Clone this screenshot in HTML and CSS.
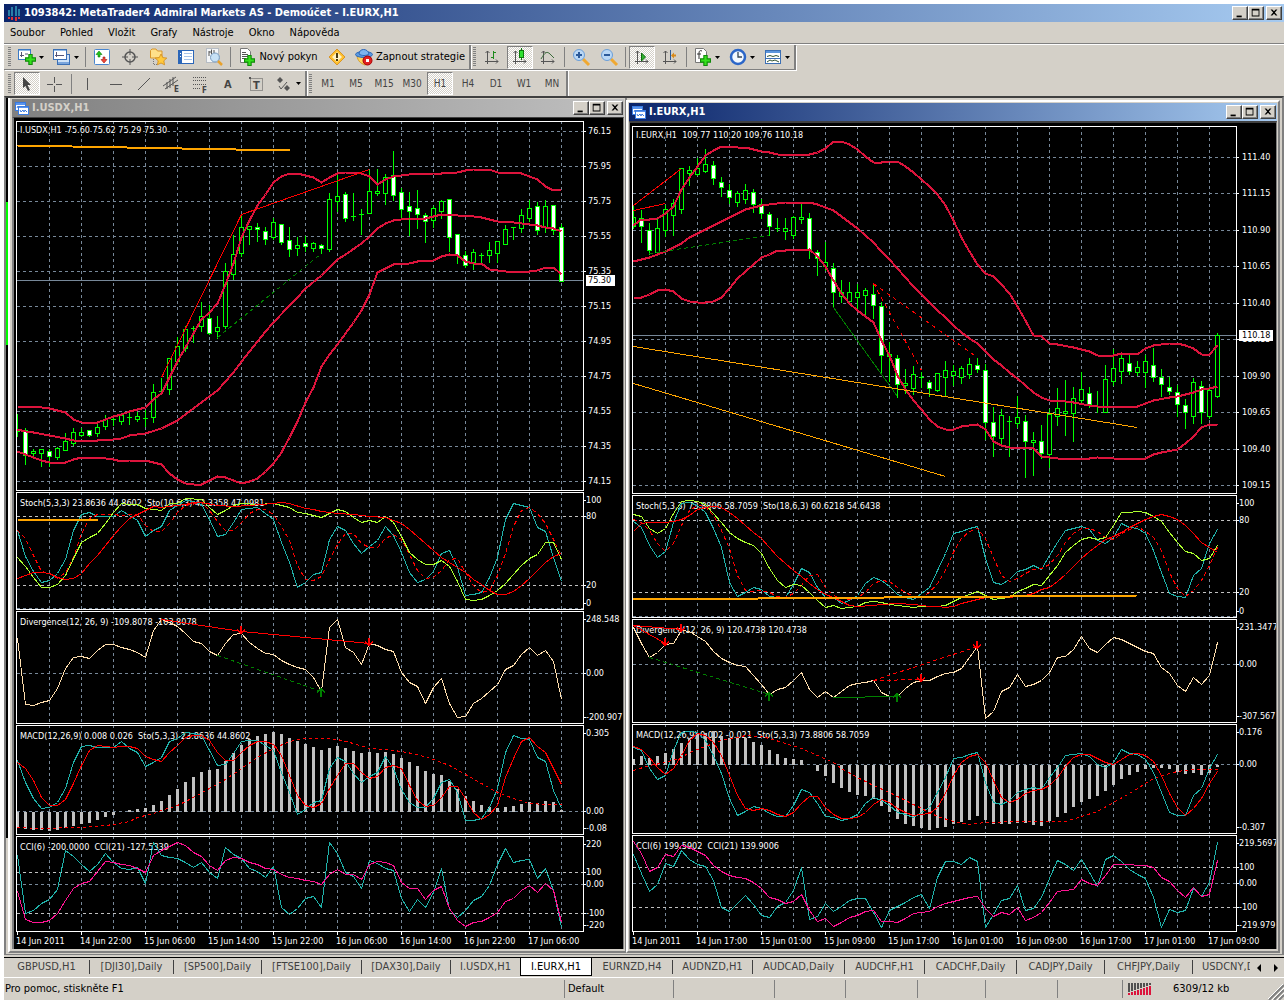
FILE: index.html
```html
<!DOCTYPE html>
<html lang="cs">
<head>
<meta charset="utf-8">
<title>1093842: MetaTrader4 Admiral Markets AS - Demoúčet - I.EURX,H1</title>
<link rel="stylesheet" href="styles.css">
</head>
<body>
<svg class="defs" aria-hidden="true">
  <symbol id="min" viewBox="0 0 16 14"><path d="M4 10h6v2H4z"/></symbol>
  <symbol id="max" viewBox="0 0 16 14"><path d="M3 2h9v9H3zM4 4v6h7V4z" fill-rule="evenodd"/></symbol>
  <symbol id="close" viewBox="0 0 16 14"><path d="M4 3h2l2 2 2-2h2L9 6.5 12 10h-2L8 8l-2 2H4l3-3.5z"/></symbol>
  <symbol id="caret" viewBox="0 0 5 3"><path d="M0 0h5L2.500 3z"/></symbol>
  <symbol id="child" viewBox="0 0 14 14"><rect x=".5" y="1.500" width="10" height="8" fill="#fff" stroke="#3a7be0"/><path d="M1 2h9v2H1z" fill="#5b95ee"/><path d="M2 7l1-2 1 2 1-2 1 2" stroke="#3a7be0" fill="none"/><rect x="3.500" y="5.500" width="10" height="8" fill="#fff" stroke="#3a7be0"/><path d="M4 6h9v1H4z" fill="#5b95ee"/><path d="M5 9l1 2 2-2 1 2 1-2 2 2" stroke="#3a7be0" fill="none"/></symbol>
  <symbol id="axes" viewBox="0 0 16 16"><path d="M3.500 15V2M1 12.500h13M1.500 4l2-2 2 2M12 10.500l2 2-2 2" fill="none" stroke="#555"/></symbol>
  <symbol id="plus" viewBox="0 0 10 10"><path d="M3.500.5h3v3h3v3h-3v3h-3v-3h-3v-3h3z" fill="#35e21c" stroke="#128a0c"/></symbol>
</svg>
<div class="app">
  <header class="titlebar main-title">
    <svg class="app-icon" viewBox="0 0 14 16"><path d="M1 5h2v6H1zM4 2h2v9H4zM8 1h2v10H8zM11 4h2v7h-2z" fill="#2a7fa8"/><path d="M1 12h2v2H1zM4 12h2v3H4zM8 12h2v4H8zM11 12h2v2h-2z" fill="#d8333c"/></svg>
    <h1>1093842: MetaTrader4 Admiral Markets AS - Demoúčet - I.EURX,H1</h1>
    <div class="winbtns"><button aria-label="Minimalizovat"><svg><use href="#min"/></svg></button><button aria-label="Maximalizovat"><svg><use href="#max"/></svg></button><button class="x" aria-label="Zavřít"><svg><use href="#close"/></svg></button></div>
  </header>
  <nav class="menu">
    <button>Soubor</button><button>Pohled</button><button>Vložit</button><button>Grafy</button><button>Nástroje</button><button>Okno</button><button>Nápověda</button>
  </nav>
  <div class="toolrow first">
    <div class="group">
      <i class="grip"></i>
      <button class="tool drop" aria-label="Nový graf"><svg class="ic" viewBox="0 0 18 18"><rect x=".5" y="1.500" width="12" height="10" fill="#fff" stroke="#3b7ac4"/><path d="M1 2h11v1H1z" fill="#8fb9e8"/><path d="M3.500 4v5M2 7.500h4M7 6h3" stroke="#557" fill="none"/><use href="#plus" x="7" y="6" width="11" height="11"/></svg><svg class="caret"><use href="#caret"/></svg></button>
      <button class="tool drop" aria-label="Profily"><svg class="ic" viewBox="0 0 18 18"><rect x="4.500" y="6.500" width="12" height="10" fill="#cfe2f7" stroke="#3b6fb4"/><path d="M5 14h11v2H5z" fill="#7aa5dc"/><rect x=".5" y="1.500" width="13" height="10" fill="#fff" stroke="#3b6fb4"/><path d="M1 2h12v1H1z" fill="#8fb9e8"/><path d="M3.500 4v5M2 7.500h9" stroke="#557" fill="none"/></svg><svg class="caret"><use href="#caret"/></svg></button>
      <i class="sep"></i>
      <button class="tool" aria-label="Přehled trhu"><svg class="ic" viewBox="0 0 18 18"><rect x="1.500" y="1.500" width="15" height="15" rx="1" fill="#fff" stroke="#4a86d0"/><path d="M6 3l3 3.500H7V9H5V6.500H3z" fill="#23c31a" stroke="#0d7d0a" stroke-width=".6"/><path d="M11 15l3-3.500h-2V9h-2v2.500H8z" fill="#f04a3a" stroke="#a01010" stroke-width=".6"/></svg></button>
      <button class="tool" aria-label="Datové okno"><svg class="ic" viewBox="0 0 18 18"><circle cx="9" cy="9" r="5" fill="none" stroke="#555" stroke-width="1.500"/><path d="M9 1v6M9 11v6M1 9h6M11 9h6" stroke="#555"/></svg></button>
      <button class="tool" aria-label="Navigátor"><svg class="ic" viewBox="0 0 18 18"><path d="M1.500 10V2.500L3 1h4l1.500 2H13v7z" fill="#ffe08a" stroke="#d9962a"/><path d="M4.500 11v5.500H8" stroke="#777" fill="none" stroke-dasharray="1 1"/><path d="M12 6l1.800 3.600 4 .5-3 2.700.8 4L12 15l-3.600 1.800.8-4-3-2.700 4-.5z" fill="#ffc93c" stroke="#d08a1a" stroke-width=".8"/></svg></button>
      <button class="tool" aria-label="Terminál"><svg class="ic" viewBox="0 0 18 18"><rect x="1.500" y="2.500" width="15" height="13" fill="#fff" stroke="#2b66b8"/><path d="M2 3h3v12H2z" fill="#2b66b8"/><path d="M7 5.500h8M7 8.500h8M7 11.500h8" stroke="#a8c4e8"/><path d="M3 5h1v1H3zM3 8h1v1H3z" fill="#fff"/></svg></button>
      <button class="tool" aria-label="Tester strategií"><svg class="ic" viewBox="0 0 18 18"><rect x="1.500" y=".5" width="12" height="14" fill="#f4f6f8" stroke="#b6bcc4"/><path d="M4 8V3M6.500 6V1.500M9 5V2M4 4h3" stroke="#555"/><circle cx="10" cy="9.500" r="4.500" fill="#bcdcf5" fill-opacity=".8" stroke="#7a9cc0"/><path d="M13 13l4 4" stroke="#e8a12c" stroke-width="2.500"/></svg></button>
      <i class="sep"></i>
      <button class="tool wide order"><svg class="ic" viewBox="0 0 18 18"><path d="M2.500.5h7l3 3v11h-10z" fill="#fff" stroke="#777"/><path d="M4 4.500h4M4 6.500h6M4 8.500h6M4 10.500h4" stroke="#555"/><use href="#plus" x="6" y="7" width="11" height="11"/></svg><span>Nový pokyn</span></button>
      <button class="tool" aria-label="MetaEditor"><svg class="ic" viewBox="0 0 18 18"><path d="M9 1l8 8-8 8-8-8z" fill="#ffc02e" stroke="#d8962a"/><path d="M9 4l5 5-5 5-5-5z" fill="#fff2c4"/><path d="M8 5h2v5H8zM8 11h2v2H8z" fill="#4a3a10"/></svg></button>
      <button class="tool wide strategy"><svg class="ic" viewBox="0 0 18 18"><path d="M2 8c1 5 3 7 8 9 3-1 5-5 5-9z" fill="#ffd45a" stroke="#d09a2a"/><ellipse cx="9" cy="6.500" rx="8.500" ry="3" fill="#5b9be0" stroke="#2b66b8"/><path d="M4 6c0-6 9-6 10 0-3 2-7 2-10 0z" fill="#7db4ee" stroke="#2b66b8"/><circle cx="12.500" cy="12.500" r="4.500" fill="#e02020" stroke="#a00"/><path d="M11 11h3v3h-3z" fill="#fff"/></svg><span>Zapnout strategie</span></button>
    </div>
    <div class="group">
      <i class="grip"></i>
      <button class="tool" aria-label="Sloupcový graf"><svg class="ic" viewBox="0 0 18 18"><use href="#axes" x="1" y="1" width="16" height="16"/><path d="M10.500 3v8M8 9.500h2M11 4.500h2" stroke="#1c8a1c" fill="none"/></svg></button>
      <button class="tool on" aria-label="Svíčkový graf"><svg class="ic" viewBox="0 0 18 18"><use href="#axes" x="1" y="1" width="16" height="16"/><path d="M10.500 0v12" stroke="#0a7a0a"/><rect x="8.500" y="2.500" width="4" height="7" fill="#2fe02f" stroke="#0a7a0a"/></svg></button>
      <button class="tool" aria-label="Čárový graf"><svg class="ic" viewBox="0 0 18 18"><use href="#axes" x="1" y="1" width="16" height="16"/><path d="M2 11c4-7 6-8 9-5l4 4" stroke="#3b6b3b" fill="none"/></svg></button>
      <i class="sep"></i>
      <button class="tool" aria-label="Přiblížit"><svg class="ic" viewBox="0 0 18 18"><path d="M11 11l6 6" stroke="#f0a830" stroke-width="3"/><circle cx="7" cy="7" r="5.500" fill="#b9d7f5" stroke="#6b9fd8"/><path d="M4 7h6M7 4v6" stroke="#2b5a9a" stroke-width="2"/></svg></button>
      <button class="tool" aria-label="Oddálit"><svg class="ic" viewBox="0 0 18 18"><path d="M11 11l6 6" stroke="#f0a830" stroke-width="3"/><circle cx="7" cy="7" r="5.500" fill="#b9d7f5" stroke="#6b9fd8"/><path d="M4 7h6" stroke="#2b5a9a" stroke-width="2"/></svg></button>
      <i class="sep"></i>
      <button class="tool on" aria-label="Automatický posun"><svg class="ic" viewBox="0 0 18 18"><use href="#axes" x="1" y="1" width="16" height="16"/><path d="M8.500 5l4 4-4 4z" fill="#2fb02f" stroke="#0a6a0a"/></svg></button>
      <button class="tool" aria-label="Posun grafu"><svg class="ic" viewBox="0 0 18 18"><use href="#axes" x="1" y="1" width="16" height="16"/><path d="M9.500 2v10" stroke="#2b5a9a"/><path d="M10 7.500l3-3v2h2v2h-2v2z" fill="#d88a1a"/></svg></button>
      <i class="sep"></i>
      <button class="tool drop" aria-label="Indikátory"><svg class="ic" viewBox="0 0 18 18"><path d="M1.500.5h8l3 3v11h-11z" fill="#fff" stroke="#777"/><path d="M8 3c-2-1-3 0-3 2v6M3 6h4" stroke="#333" fill="none"/><use href="#plus" x="6" y="7" width="11" height="11"/></svg><svg class="caret"><use href="#caret"/></svg></button>
      <button class="tool drop" aria-label="Periody"><svg class="ic" viewBox="0 0 18 18"><circle cx="9" cy="9" r="7" fill="#f2f8ff" stroke="#2b66c8" stroke-width="2.500"/><path d="M9 4v5h4" stroke="#345" fill="none" stroke-width="1.300"/></svg><svg class="caret"><use href="#caret"/></svg></button>
      <button class="tool drop" aria-label="Šablony"><svg class="ic" viewBox="0 0 18 18"><rect x="1.500" y="2.500" width="15" height="13" fill="#fff" stroke="#3b6fb4"/><path d="M2 3h14v2H2z" fill="#5b95dc"/><path d="M2 10.500h14" stroke="#3b6fb4"/><path d="M3 8.500l3-1 3 1 3-1 3 1M3 14l3-2 2 1 3-1 4 2" stroke="#353" fill="none"/></svg><svg class="caret"><use href="#caret"/></svg></button>
    </div>
  </div>
  <div class="toolrow second">
    <div class="group">
      <i class="grip"></i>
      <button class="tool on" aria-label="Kurzor"><svg class="ic" viewBox="0 0 18 18"><path d="M5 2l8 8H9.500l2.500 5-2 1-2.500-5L5 13z" fill="#444"/></svg></button>
      <button class="tool" aria-label="Nitkový kříž"><svg class="ic" viewBox="0 0 18 18"><path d="M8.500 2v6M8.500 11v6M1 9.500h6M10 9.500h6" stroke="#555"/></svg></button>
      <i class="sep"></i>
      <button class="tool" aria-label="Svislá čára"><svg class="ic" viewBox="0 0 18 18"><path d="M8.500 3v12" stroke="#555"/></svg></button>
      <button class="tool" aria-label="Vodorovná čára"><svg class="ic" viewBox="0 0 18 18"><path d="M3 9.500h12" stroke="#555"/></svg></button>
      <button class="tool" aria-label="Trendová čára"><svg class="ic" viewBox="0 0 18 18"><path d="M3 15L15 3" stroke="#555"/></svg></button>
      <button class="tool" aria-label="Kanál"><svg class="ic" viewBox="0 0 18 18"><path d="M0 11L13 2M2 14l13-9M4 7v7M7 4v9M10 2v9" stroke="#555" fill="none"/><text x="11" y="17">E</text></svg></button>
      <button class="tool" aria-label="Fibonacci"><svg class="ic" viewBox="0 0 18 18"><path d="M2 2.500h14M2 5.500h14M2 9.500h14M2 13.500h8" stroke="#555" stroke-dasharray="1 1"/><text x="11" y="18">F</text></svg></button>
      <button class="tool" aria-label="Text"><svg class="ic" viewBox="0 0 18 18"><text class="big" x="5" y="13">A</text></svg></button>
      <button class="tool" aria-label="Popisek"><svg class="ic" viewBox="0 0 18 18"><rect x="3.500" y="3.500" width="12" height="12" fill="none" stroke="#555" stroke-dasharray="1 1"/><path d="M2 2h2v2H2z" fill="#555"/><text class="big" x="6" y="14">T</text></svg></button>
      <button class="tool drop" aria-label="Šipky"><svg class="ic" viewBox="0 0 18 18"><path d="M5 2l3 3-3 3-3-3zM12 10l3 3-3 3-3-3z" fill="#555"/><path d="M4 11l2 3 6-7" fill="none" stroke="#555"/></svg><svg class="caret"><use href="#caret"/></svg></button>
    </div>
    <div class="group tf">
      <i class="grip"></i>
      <button class="tool">M1</button><button class="tool">M5</button><button class="tool">M15</button><button class="tool">M30</button><button class="tool on">H1</button><button class="tool">H4</button><button class="tool">D1</button><button class="tool">W1</button><button class="tool">MN</button>
    </div>
  </div>
  <main class="desk">
    <section class="window usdx">
      <header class="titlebar"><svg class="child-icon"><use href="#child"/></svg><h2>I.USDX,H1</h2>
        <div class="winbtns"><button aria-label="Minimalizovat"><svg><use href="#min"/></svg></button><button aria-label="Maximalizovat"><svg><use href="#max"/></svg></button><button class="x" aria-label="Zavřít"><svg><use href="#close"/></svg></button></div></header>
      <div class="client"><svg class="chart" id="usdx" width="609" height="831" viewBox="14 118 609 831" role="img" aria-label="I.USDX,H1"></svg></div>
    </section>
    <section class="window eurx">
      <header class="titlebar"><svg class="child-icon"><use href="#child"/></svg><h2>I.EURX,H1</h2>
        <div class="winbtns"><button aria-label="Minimalizovat"><svg><use href="#min"/></svg></button><button aria-label="Maximalizovat"><svg><use href="#max"/></svg></button><button class="x" aria-label="Zavřít"><svg><use href="#close"/></svg></button></div></header>
      <div class="client"><svg class="chart" id="eurx" width="646" height="826" viewBox="630 123 646 826" role="img" aria-label="I.EURX,H1"></svg></div>
    </section>
  </main>
  <nav class="tabs">
    <div class="tablist">
      <button>GBPUSD,H1</button><button>[DJI30],Daily</button><button>[SP500],Daily</button><button>[FTSE100],Daily</button><button>[DAX30],Daily</button><button>I.USDX,H1</button><button class="current">I.EURX,H1</button><button>EURNZD,H4</button><button>AUDNZD,H1</button><button>AUDCAD,Daily</button><button>AUDCHF,H1</button><button>CADCHF,Daily</button><button>CADJPY,Daily</button><button>CHFJPY,Daily</button><button>USDCNY,Daily</button>
    </div>
    <button class="scroll" aria-label="Vlevo"><svg width="4" height="8"><path d="M4 0v8L0 4z"/></svg></button>
    <button class="scroll" aria-label="Vpravo"><svg width="4" height="8"><path d="M0 0v8l4-4z"/></svg></button>
  </nav>
  <footer class="status">
    <span>Pro pomoc, stiskněte F1</span><span>Default</span><span></span><span></span><span></span><span></span><span></span><span></span>
    <span class="net"><svg id="signal" width="24" height="14"></svg>6309/12 kb</span>
    <svg class="corner" width="16" height="16"><path d="M1 16L16 1M6 16L16 6M11 16l5-5" stroke="#808080" stroke-width="2"/><path d="M0 15L15 0M4 16L16 4M9 16l7-7" stroke="#fff"/></svg>
  </footer>
</div>
<script src="charts.js"></script>
</body>
</html>
```
FILE: styles.css
```css
* { box-sizing: border-box; }
body {
  margin: 0;
  padding: 4px 4px 2px;
  min-height: 100vh;
  display: flex;
  background: #fff;
  color: #000;
  font: 11px/14px "DejaVu Sans Condensed", "DejaVu Sans", sans-serif;
}
button { font: inherit; color: inherit; background: none; border: 0; padding: 0; margin: 0; }
h1, h2 { margin: 0; font-size: 11px; line-height: 14px; font-weight: bold; white-space: nowrap; }
.defs { position: absolute; width: 0; height: 0; }

.app { flex: 1; min-width: 0; display: flex; flex-direction: column; background: #d4d0c8; }

.titlebar { display: flex; align-items: center; height: 18px; padding: 0 1px 0 3px; gap: 3px; color: #fff; background: linear-gradient(90deg, #0a246a, #a6caf0); }
.main-title { padding-right: 2px; }
.app-icon { width: 14px; height: 16px; }
.child-icon { width: 14px; height: 14px; }
.winbtns { display: flex; margin-left: auto; }
.winbtns button { width: 16px; height: 14px; background: #d4d0c8; border: 1px solid; border-color: #fff #404040 #404040 #fff; box-shadow: inset -1px -1px #808080; display: flex; }
.winbtns svg { width: 14px; height: 12px; }
.winbtns .x { margin-left: 2px; }

.menu { display: flex; align-items: center; gap: 15px; height: 22px; padding-left: 6px; border-bottom: 1px solid #808080; }

.toolrow { display: flex; height: 26px; }
.first { border-top: 1px solid #fff; }
.second { padding-top: 1px; }
.group { display: flex; align-items: center; border-right: 2px solid; border-color: #808080; box-shadow: 1px 0 #fff; }
.first .group { border-bottom: 1px solid #808080; box-shadow: 1px 1px #fff; }
.grip { width: 3px; height: 20px; margin: 0 2px 0 4px; background: repeating-linear-gradient(#808080 0 1px, #d4d0c8 1px 2px); }
.group + .group .grip { margin-left: 2px; }
.sep { width: 1px; height: 20px; margin: 0 2px; background: #808080; }
.tool { width: 28px; height: 23px; flex: none; display: flex; align-items: center; justify-content: center; gap: 3px; white-space: nowrap; }
.tool.drop { width: 35px; }
.tool.order { width: 90px; }
.tool.strategy { width: 118px; }
.tool.on { width: 26px; margin: 0 1px; border: 1px solid; border-color: #808080 #fff #fff #808080; background: repeating-conic-gradient(#fff 0 25%, #d4d0c8 0 50%) 0 0 / 2px 2px; }
.ic { width: 18px; height: 18px; flex: none; overflow: visible; }
.ic text { font-size: 8px; fill: #444; font-weight: bold; }
.ic .big { font-size: 11px; }
.caret { width: 5px; height: 3px; flex: none; }
.tf { color: #444; font-size: 10px; }

.desk { flex: 1; min-height: 859px; position: relative; overflow: hidden; border: 2px solid; border-color: #404040 #808080 #808080; border-bottom-width: 1px; background: linear-gradient(#000 0 104px, #0f0 104px 247px, #000 247px 740px, #d4d0c8 740px) 0 0 / 2px 100% no-repeat, #d4d0c8; }
.window { position: absolute; border: 2px solid; border-color: #fff #808080 #808080 #fff; padding: 1px 1px 2px; background: #d4d0c8; }
.usdx { left: 2px; top: -2px; padding-left: 2px; }
.eurx { left: 620px; top: 2px; }
.usdx .titlebar { color: #d4d0c8; background: linear-gradient(90deg, #808080, #c0c0c0); }
.client { border: 1px solid #808080; border-top-color: #404040; border-bottom: 0; }
.usdx .client { border-left-width: 2px; }
.eurx .client { border-top-width: 2px; }
.chart { display: block; background: #000; font-size: 9px; }
.chart text { fill: #fff; }
.chart .title { paint-order: stroke; stroke: #000; stroke-width: 2px; }
.chart .now { fill: #000; }

.tabs { display: flex; height: 22px; padding-top: 2px; }
.tabs > * { border-top: 1px solid #000; }
.tablist { flex: 1; min-width: 0; display: grid; grid-template-columns: 86px 84px 88px 100px 89px 69px 72px 81px 80px 92px 80px 92px 88px 88px 1fr; align-items: start; overflow: hidden; color: #404040; }
.tablist button { height: 14px; margin-top: 2px; overflow: hidden; white-space: nowrap; text-align: center; border-right: 1px solid #404040; }
.tablist button:nth-child(6), .tablist button:last-child { border-right: 0; }
.tablist button:last-child { text-align: left; padding-left: 9px; }
.tablist .current { height: 18px; margin: 0; background: #fff; color: #000; border: 1px solid #000; border-top: 0; }
.scroll { width: 17px; display: flex; align-items: center; justify-content: center; }

.status { display: grid; grid-template-columns: 560px 109px 101px 71px 72px 68px 72px 65px 1fr 16px; align-items: center; height: 23px; border-top: 1px solid #fff; }
.status span { height: 18px; padding-left: 3px; line-height: 18px; border-left: 1px solid #808080; }
.status span:first-child { border-left: 0; padding-left: 1px; }
.status .net { display: flex; align-items: center; gap: 21px; padding-left: 5px; }
.corner { align-self: end; }
```
FILE: charts.js
```js
const NS = 'http://www.w3.org/2000/svg';
const RED = '#ff0000', TEAL = '#20b2aa', LIME = '#00ff00', GRID = '#778899', SILVER = '#c0c0c0';
const YELLOW = '#adff2f', CRIMSON = '#dc143c', PEACH = '#ffdead', PINK = '#ff1493', ORANGE = '#ffa500', GREEN = '#008000';

function el(parent, name, attrs, text) {
  const n = document.createElementNS(NS, name);
  for (const k in attrs) n.setAttribute(k, attrs[k]);
  if (text !== undefined) n.textContent = text;
  parent.appendChild(n);
  return n;
}

// A series is a list of values, one per bar. "." skips a bar, "@n" jumps to bar n.
// Values are thirds of a pixel below the pane's base line.
function series(str) {
  const out = [];
  let i = 0;
  for (const t of str.trim().split(/\s+/)) {
    if (t[0] === '@') i = +t.slice(1);
    else { if (t !== '.') out.push([i, +t]); i++; }
  }
  return out;
}

function draw(id, c) {
  const svg = document.getElementById(id);
  const X = i => c.x0 + 8 * i + 0.5;
  const g = el(svg, 'g', { 'shape-rendering': 'crispEdges', fill: 'none' });
  const seg = (x1, y1, x2, y2, stroke, o) => el(g, 'line', Object.assign({ x1, y1, x2, y2, stroke }, o));
  const label = (x, y, s, cls) => el(svg, 'text', { x, y: y + 3, class: cls || '' }, s);

  for (const p of c.panes) {
    const Y = v => p.base + Math.round(v / 3) + 0.5;
    for (let x = c.x0 + 32; x < c.right; x += 32) seg(x + 0.5, p.top, x + 0.5, p.bottom, GRID, { 'stroke-dasharray': '3 3' });
    for (const y of p.grid) seg(c.x0, y + 0.5, c.right, y + 0.5, GRID, { 'stroke-dasharray': '3 3' });
    for (const y of p.levels || []) seg(c.x0, y + 0.5, c.right, y + 0.5, SILVER, { 'stroke-dasharray': '3 3' });
    el(g, 'rect', { x: c.x0 - 0.5, y: p.top + 0.5, width: c.right - c.x0 + 1, height: p.bottom - p.top, stroke: '#fff' });
    el(g, 'text', { x: c.x0 + 3, y: p.titleY + 3, class: 'title' }, p.title).style.whiteSpace = 'pre';
    for (const [y, s] of p.labels) {
      label(c.right + p.labelGap, y, s);
      seg(c.right, y + 0.5, c.right + 3, y + 0.5, '#fff');
    }
    if (p.now) {
      seg(c.x0, p.now[0] + 0.5, c.right, p.now[0] + 0.5, GRID);
      el(svg, 'rect', { x: c.right + 3, y: p.now[0] - 5, width: p.now[2], height: 11, fill: '#fff' });
      label(c.right + p.labelGap, p.now[0], p.now[1], 'now');
    }
    if (p.candles) p.candles.trim().split(/\s*;\s*/).forEach((row, i) => {
      const v = row.split(/\s+/);
      const [h, a, b, l] = v.map(Number).slice(0, 4).map(n => Y(n));
      seg(X(i), h, X(i), l + 0.5, LIME);
      const left = i ? X(i) - 2 : X(i);
      if (b - a < 2) seg(left - (i ? 0.5 : 0), b, X(i) + 2.5, b, LIME);
      else el(g, 'rect', { x: left, y: a, width: X(i) + 2 - left, height: b - a, stroke: LIME, fill: v[4] ? '#fff' : '#000' });
    });
    if (p.bars) for (const [i, v] of series(p.bars)) {
      const z = Y(p.zero), y = Y(v);
      el(g, 'rect', { x: i ? X(i) - 1.5 : X(i) - 0.5, y: Math.min(z, y), width: i ? 3 : 2, height: Math.abs(z - y), fill: SILVER });
    }
    for (const [color, width, str, dash] of p.lines || []) {
      el(g, 'polyline', { points: series(str).map(([i, v]) => X(i) + ',' + Y(v)).join(' '), stroke: color, 'stroke-width': width, 'stroke-dasharray': dash || 'none', 'stroke-linejoin': 'round' });
    }
    for (const [i1, v1, i2, v2, color, width, dash] of p.trends || [])
      seg(X(i1), Y(v1), X(i2), Y(v2), color, { 'stroke-width': width, 'stroke-dasharray': dash || 'none' });
    for (const [i, v, up] of p.arrows || []) {
      const x = X(i) - 0.5, y = Y(v);
      el(g, 'path', { d: up ? `M${x} ${y + 8}V${y}M${x - 4} ${y + 4}l4-4 4 4` : `M${x} ${y}v8M${x - 4} ${y + 4}l4 4 4-4`, stroke: up ? GREEN : RED, 'stroke-width': 2 });
    }
  }
  c.times.forEach((s, k) => {
    seg(c.x0 + 64 * k + 0.5, 931, c.x0 + 64 * k + 0.5, 935, '#fff');
    label(c.x0 - 1 + 64 * k, 941, s);
  });
}

const steps = (y0, p0, dy, dp, n) => Array.from({ length: n }, (_, k) => [Math.round(y0 + dy * k), (p0 - dp * k).toFixed(2)]);
const leftPrices = steps(131, 76.15, 35, 0.2, 11), rightPrices = steps(157, 111.4, 36.45, 0.25, 10);

draw('usdx', { x0: 17, right: 583,
  times: ['14 Jun 2011', '14 Jun 22:00', '15 Jun 06:00', '15 Jun 14:00', '15 Jun 22:00', '16 Jun 06:00', '16 Jun 14:00', '16 Jun 22:00', '17 Jun 06:00'],
  panes: [
    { base: 120, top: 121, bottom: 490, title: 'I.USDX,H1  75.60 75.62 75.29 75.30', titleY: 130, grid: leftPrices.map(p => p[0]), labels: leftPrices, labelGap: 5, now: [280, '75.30', 29],
      candles: `879 930 932 947; 921 931 1006 1032 1; 984 993 1000 1014; 987 988 1000 1038; 984 994 1007 1038 1; 978 985 1011 1017; 937 963 989 991; 921 937 968 974; 921 936 944 948; 930 931 944 948 1;
        900 921 938 948; 882 897 917 927; 881 893 896 916; 876 884 902 911; 875 888 890 912; 873 888 896 902; 867 893 895 918; 789 816 890 906; 770 809 812 812; 714 715 806 822;
        648 678 722 732; 615 628 685 692; 616 621 624 666; 543 588 617 632; 552 594 638 641 1; 585 621 632 653; 426 453 617 623; 342 402 461 476; 284 321 398 407; 318 319 328 372;
        306 322 328 362 1; 318 333 356 371 1; 291 306 350 356; 312 313 365 371 1; 318 360 386 407 1; 349 375 383 405; 346 370 377 392 1; 363 369 383 392; 369 375 383 399 1; 216 237 386 392;
        160 228 244 274; 213 222 294 302 1; 216 285 288 299; 264 279 282 342; 147 213 278 279; 144 213 219 224; 159 171 218 251; 90 165 224 239 1; 201 216 266 296 1; 213 258 272 345 1;
        207 264 281 323 1; 276 285 302 366 1; 256 264 299 320; 238 243 272 294; 237 237 350 393 1; 340 342 404 429 1; 390 405 434 441 1; 384 396 425 447; 395 402 405 426; 363 390 404 425;
        360 363 398 426; 312 327 371 372; 317 318 322 357; 264 285 323 336; 237 264 293 302; 243 258 329 342 1; 237 258 321 335; 255 255 329 342 1; 309 321 482 482 1`,
      lines: [
        [CRIMSON, 2, '857 . 858 . 864 870 876 897 906 . 906 897 889 881 872 866 860 838 818 772 724 680 638 597 577 550 493 430 352 300 256 222 187 169 159 159 166 171 187 172 160 157 156 160 169 192 177 168 164 162 @52 160 158 . 157 150 148 146 147 155 . 157 160 167 178 199 210 206'],
        [CRIMSON, 2, '926 932 936 . 946 . 953 959 960 . 959 . 956 953 946 . 940 . 925 . 901 . 865 . 827 809 784 755 724 692 662 634 605 . 556 531 505 . 464 . 416 401 . 368 347 325 309 301 297 295 294 293 288 282 . 284 . 287 290 296 302 . 306 308 311 316 320 325 332'],
        [CRIMSON, 2, '992 1003 1012 1019 1025 . 1025 1017 1011 . 1010 . 1017 1022 1020 . 1020 1025 1033 1059 1078 1088 1091 1091 1081 1068 1071 1081 1089 1084 1073 1054 1030 997 950 902 845 800 738 703 672 640 605 570 522 457 445 433 . 428 424 . 419 408 401 406 422 428 430 446 450 452 @64 452 449 441 440 463'],
        [RED, 1, '@18 770 @28 281 @44 146'], [GREEN, 1, '@25 650 @38 400', '4 3']],
      trends: [[0, 75, 34.1, 91, ORANGE, 2]] },
    { base: 490, top: 492, bottom: 609, title: 'Stoch(5,3,3) 23.8636 44.8602  Sto(10,6,3) 42.3358 47.0981', titleY: 503, grid: [608], levels: [516, 585], labels: [[500, '100'], [516, '80'], [585, '20'], [603, '0']], labelGap: 3,
      lines: [
        [TEAL, 1, '121 198 243 275 270 250 207 121 73 66 78 79 78 61 75 90 138 121 109 60 46 30 32 42 88 137 132 97 58 54 52 70 86 155 215 291 275 251 246 147 109 121 160 190 168 151 109 136 185 246 275 267 243 190 179 230 314 311 307 261 202 88 40 46 52 111 122 202 272'],
        [RED, 1, '121 143 196 243 249 265 246 200 130 85 73 . 73 75 73 73 105 122 124 100 66 46 . 36 60 92 120 119 97 68 56 58 72 108 150 225 268 270 258 208 163 130 128 158 172 170 145 132 146 193 240 264 262 240 207 205 245 285 307 300 255 190 107 60 50 70 98 148 198', '4 3'],
        [YELLOW, 1, '202 227 261 290 290 281 256 204 156 142 129 100 66 38 41 43 55 . 59 38 38 25 . 28 52 71 59 45 38 . 41 . 38 44 52 66 68 75 80 69 58 63 80 96 91 95 77 97 139 187 208 222 222 210 228 272 327 331 328 315 300 278 252 225 205 191 157 157 208'],
        [RED, 1, '265 255 245 246 250 260 268 263 248 220 196 164 134 107 84 71 59 48 52 . . 43 37 37 . 46 . 48 . 45 . . 40 37 40 . 53 58 64 . 69 . 71 . 77 . 80 . 100 116 137 158 180 200 215 230 247 267 283 300 313 313 302 285 263 240 217 197 190']],
      trends: [[0, 86, 10, 86, ORANGE, 2]] },
    { base: 490, top: 611, bottom: 723, title: 'Divergence(12, 26, 9) -109.8078 -103.8078', titleY: 622, grid: [673], labels: [[619, '248.548'], [673, '0.00'], [717, '-200.907']], labelGap: 3,
      lines: [[PEACH, 1, '443 643 646 637 631 595 534 502 498 505 480 463 463 471 476 487 501 420 388 395 408 428 454 458 482 496 460 433 428 455 473 490 491 511 523 532 538 562 602 410 386 472 487 523 460 466 476 482 545 576 588 640 592 563 640 682 677 640 625 602 583 537 525 493 470 496 479 514 628'],
        [RED, 1, '@18 388 @28 424 @44 460'], [GREEN, 1, '@25 496 @38 602', '4 3']],
      arrows: [[28, 405], [44, 441], [38, 593, 1]] },
    { base: 725, top: 725, bottom: 834, title: 'MACD(12,26,9) 0.008 0.026  Sto(5,3,3) 23.8636 44.8602', titleY: 736, grid: [811], labels: [[733, '0.305'], [811, '0.00'], [828, '-0.08']], labelGap: 3, zero: 258,
      bars: '303 308 312 312 315 312 307 300 294 291 281 273 266 259 252 249 246 237 225 207 189 168 153 138 132 129 104 81 57 40 30 24 18 24 36 45 54 63 72 65 60 66 75 81 78 81 78 84 96 108 120 135 144 147 165 189 210 225 237 243 246 243 240 234 228 231 225 228 252',
      lines: [
        [TEAL, 1, '105 170 220 250 246 230 190 110 62 59 66 66 66 49 68 80 124 110 95 48 40 22 25 30 75 121 118 85 48 46 45 60 75 140 200 266 252 231 225 130 97 107 145 172 152 142 94 130 192 230 247 246 220 172 162 200 286 284 280 245 190 80 30 38 42 95 107 195 250'],
        [RED, 1, '112 128 165 215 240 240 222 175 120 75 61 64 66 62 63 68 93 103 108 82 60 37 31 30 45 80 105 106 82 60 49 48 58 90 150 210 240 246 235 190 150 113 114 140 158 153 127 119 128 180 225 243 240 215 182 182 220 262 283 268 240 155 98 48 36 62 82 130 178'],
        [RED, 1, '307 . . 308 310 . 307 . 305 . 302 . 296 . 287 275 . 264 256 . 240 . 215 . 190 . 162 . 130 . 95 . 70 . 48 . 38 . 38 . 43 . 54 . 68 . 72 . 78 . 88 . 101 . 120 . 148 . 175 . 200 . 218 . 234 . 238 . 238', '3 3']] },
    { base: 725, top: 836, bottom: 931, title: 'CCI(6) -200.0000  CCI(21) -127.5339', titleY: 847, grid: [884], levels: [872, 913], labels: [[844, '220'], [872, '100'], [884, '0.00'], [913, '-100'], [925, '-220']], labelGap: 3,
      lines: [
        [TEAL, 1, '390 565 555 533 522 493 374 392 418 437 417 385 410 428 431 426 473 352 390 395 398 412 425 412 440 460 365 388 400 428 438 455 422 545 566 548 520 514 545 352 385 442 452 489 405 415 428 434 520 558 522 547 500 428 552 575 556 524 512 480 418 369 410 405 403 458 430 495 605'],
        [PINK, 1, '498 582 590 590 586 565 524 490 474 468 437 408 412 418 421 428 442 390 374 362 352 360 380 392 421 434 405 396 398 410 418 430 432 448 457 460 466 469 476 448 431 447 448 461 418 408 412 420 472 490 488 521 495 482 550 585 603 592 589 576 560 528 520 495 481 500 475 495 590']] }
  ] });

draw('eurx', { x0: 633, right: 1236,
  times: ['14 Jun 2011', '14 Jun 17:00', '15 Jun 01:00', '15 Jun 09:00', '15 Jun 17:00', '16 Jun 01:00', '16 Jun 09:00', '16 Jun 17:00', '17 Jun 01:00', '17 Jun 09:00'],
  panes: [
    { base: 120, top: 126, bottom: 493, title: 'I.EURX,H1  109.77 110.20 109.76 110.18', titleY: 135, grid: rightPrices.map(p => p[0]), labels: rightPrices, labelGap: 6, now: [335, '110.18', 34],
      candles: `255 291 318 325; 267 294 318 365 1; 306 330 389 402 1; 294 325 395 402; 252 267 331 347; 234 249 284 345; 144 145 266 279; 135 150 160 195; 111 145 163 164; 84 133 152 155;
        120 135 173 191 1; 168 186 200 228 1; 189 210 230 248 1; 210 219 245 258; 189 210 236 249; 203 216 251 276 1; 234 252 279 293 1; 274 282 317 344 1; 291 321 324 332; 291 324 332 357;
        285 291 344 354; 249 291 296 309; 276 294 388 413 1; 388 396 413 465 1; 363 426 438 450; 426 444 515 561 1; 477 516 528 545; 483 516 542 552; 489 516 532 566; 502 510 524 582;
        486 522 554 594 1; 543 558 704 756 1; 663 702 708 783; 702 714 791 830 1; 744 789 795 819; 735 762 803 821; 752 768 772 801; 777 786 803 828 1; 760 760 809 812; 720 750 772 828;
        732 753 765 795; 735 744 770 789; 711 733 761 774; 711 735 746 755 1; 729 750 905 958 1; 858 906 949 1007 1; 864 885 953 969; 885 900 904 1008; 825 891 908 922; 882 903 962 1071 1;
        933 960 965 1065; 912 963 998 1014 1; 864 882 1001 1041; 801 864 887 915; 777 873 878 945; 798 834 878 963; 753 807 839 848; 798 819 851 860 1; 810 855 857 876; 732 777 875 876;
        684 744 782 795; 702 714 752 789; 696 729 752 762 1; 720 741 755 765; 702 723 755 801; 680 735 770 783 1; 744 771 791 828 1; 768 801 812 822 1; 792 816 851 888 1; 834 855 875 924 1;
        770 787 887 909; 780 798 875 909 1; 798 810 887 893; 636 645 827 831`,
      lines: [
        [CRIMSON, 2, '315 297 297 294 280 257 207 170 138 105 90 78 79 80 81 86 92 97 101 102 @22 102 96 83 63 63 71 86 107 125 125 123 123 138 156 177 197 222 254 300 352 392 432 458 469 493 519 559 600 644 649 668 671 . 681 . 692 704 . 705 698 . 703 683 676 . 669 669 675 683 702 702 674'],
        [CRIMSON, 2, '423 417 410 403 393 382 368 352 340 328 316 303 292 279 268 260 254 251 248 246 @22 247 253 261 270 287 305 325 345 367 392 416 443 470 497 523 547 570 592 614 637 653 670 693 716 736 755 775 796 815 830 839 . 844 847 . 854 858 @63 858 850 841 . 830 827 822 815 808 805 797'],
        [CRIMSON, 2, '531 530 522 510 506 512 535 542 545 546 542 532 505 475 453 432 411 402 390 389 @22 386 408 437 480 520 550 571 587 607 660 704 765 808 840 868 897 917 927 927 918 . 912 928 962 975 981 @50 984 1007 1010 1014 @57 1014 1011 . 1014 @64 1014 1002 997 . 986 970 948 920 912 915'],
        [RED, 1, '255 @6 145'], [RED, 1, '270 @4 250'], [GREEN, 1, '@2 398 @17 344', '4 3'], [GREEN, 1, '@25 561 @33 827'],
        [RED, 1, '@30 489 @36 750', '4 4'], [RED, 1, '@30 489 @43 710', '4 4']],
      trends: [[0, 677, 63, 922, ORANGE, 1], [0, 788, 39, 1069, ORANGE, 1]] },
    { base: 490, top: 495, bottom: 617, title: 'Stoch(5,3,3) 73.8806 58.7059  Sto(18,6,3) 60.6218 54.6438', titleY: 506, grid: [616], levels: [520, 592], labels: [[503, '100'], [520, '80'], [592, '20'], [611, '0']], labelGap: 3,
      lines: [
        [TEAL, 1, '93 110 165 202 184 95 40 37 45 65 115 170 275 319 306 292 297 318 320 321 282 235 247 290 320 322 338 330 315 278 260 270 287 312 320 327 310 290 240 190 128 124 115 109 205 275 283 268 243 238 225 237 195 155 120 115 109 118 150 160 142 98 112 113 130 180 245 308 318 322 255 235 160 118'],
        [RED, 1, '86 95 120 158 184 160 105 60 45 48 75 120 175 255 300 304 300 305 318 320 310 285 255 252 290 315 325 328 322 305 280 270 272 290 305 318 320 305 280 240 185 145 122 113 145 200 255 272 265 250 238 235 222 195 155 128 115 113 122 142 148 130 118 108 122 140 180 245 295 317 300 270 225 170', '4 3'],
        [YELLOW, 1, '72 78 115 130 114 70 34 30 33 42 70 95 125 145 155 165 190 235 270 291 283 284 305 330 350 346 355 352 348 335 334 337 341 345 348 352 347 349 349 345 332 322 313 304 315 328 325 320 302 295 283 286 255 225 185 165 148 142 148 142 105 67 66 64 67 78 92 125 155 183 190 211 205 165'],
        [RED, 1, '122 98 96 . 97 92 87 75 57 50 47 50 65 83 105 125 145 170 198 220 240 258 278 298 312 322 334 344 347 . 346 342 . 340 . 342 . 348 349 350 347 340 333 326 321 318 . 320 . 315 310 298 290 272 252 228 205 183 165 148 138 125 112 100 88 77 73 77 88 105 130 155 172 185']],
      trends: [[0, 327, 63, 315, ORANGE, 2]] },
    { base: 490, top: 619, bottom: 722, title: 'Divergence(12, 26, 9) 120.4738 120.4738', titleY: 630, grid: [664], labels: [[627, '231.3477'], [664, '0.00'], [716, '-307.567']], labelGap: 3,
      lines: [[PEACH, 1, '410 460 500 487 462 460 420 424 437 453 482 503 515 525 527 555 582 613 598 591 570 545 598 622 604 622 603 585 579 575 571 607 617 618 595 575 570 571 558 548 545 535 500 469 683 663 602 592 553 587 583 570 545 502 497 478 437 475 487 461 441 447 460 471 482 488 530 548 585 604 562 581 555 457'],
        [RED, 1, '405 @4 460'], [RED, 1, '405 @6 416'], [GREEN, 1, '@2 500 @17 613', '4 3'], [RED, 1, '@30 571 @43 469', '4 3'], [RED, 1, '@30 571 @36 567', '4 3'], [GREEN, 1, '@25 622 @33 619']],
      arrows: [[4, 442], [6, 400], [36, 550], [43, 450], [17, 606, 1], [33, 608, 1]] },
    { base: 725, top: 724, bottom: 833, title: 'MACD(12,26,9) 0.002 -0.021  Sto(5,3,3) 73.8806 58.7059', titleY: 735, grid: [764], labels: [[732, '0.176'], [764, '0.00'], [827, '-0.307']], labelGap: 3, zero: 118,
      bars: '99 90 97 90 80 69 50 35 22 20 15 30 35 36 36 47 57 72 84 96 99 102 118 135 150 171 186 198 207 210 219 240 258 279 293 300 306 311 306 303 294 288 282 270 282 293 294 294 291 290 297 299 285 272 261 243 228 219 210 195 177 159 147 138 129 126 126 129 138 144 141 147 141 122',
      lines: [
        [TEAL, 1, '66 76 130 163 150 75 22 17 20 45 90 145 220 270 257 244 248 265 272 272 240 193 202 235 274 275 286 278 268 235 217 225 240 262 268 276 262 245 200 155 98 97 87 82 170 232 236 225 200 193 185 192 155 125 90 87 83 92 118 126 110 71 85 87 103 140 200 260 270 270 210 190 130 87'],
        [RED, 1, '64 72 95 125 148 130 90 45 24 30 50 90 150 210 248 254 248 255 266 272 262 235 212 212 245 268 280 280 276 260 238 222 230 248 262 271 268 265 245 205 150 110 92 88 110 165 215 230 222 205 195 193 180 155 122 95 86 87 98 112 118 103 87 83 90 108 150 205 245 270 250 220 175 138'],
        [RED, 1, '135 . 120 . 110 . 95 80 . 62 . 45 . 35 30 . 32 38 . 55 . 70 . 90 . 112 128 . 155 . 180 . 200 . 225 . 250 . 272 . 288 . 296 . 292 @48 289 . 288 . 289 . 288 . 272 . 258 . 232 . 205 . 175 160 . 145 138 . 133 . . 133', '3 3']] },
    { base: 725, top: 835, bottom: 931, title: 'CCI(6) 199.5902  CCI(21) 139.9006', titleY: 846, grid: [883], levels: [867, 907], labels: [[843, '219.5697'], [867, '100'], [883, '0.00'], [907, '-100'], [925, '-219.979']], labelGap: 3,
      lines: [
        [TEAL, 1, '388 445 499 478 414 422 375 403 418 423 465 545 558 535 509 538 570 575 543 530 495 427 583 572 535 557 543 524 519 520 562 605 555 543 530 517 506 550 455 409 409 417 397 409 605 567 524 519 479 554 550 517 460 405 416 436 403 440 482 403 389 408 433 447 459 515 605 552 562 555 490 514 470 350'],
        [PINK, 1, '348 385 438 425 388 394 360 367 378 390 420 437 451 457 458 471 488 517 523 535 527 506 555 589 580 603 590 577 571 559 556 587 587 590 578 565 560 559 543 535 529 523 517 514 550 574 562 567 545 584 576 560 530 497 496 492 461 475 481 450 418 416 418 421 421 425 457 467 494 515 485 514 506 405']] }
  ] });

// Connection indicator: columns split into a grey top and a red bottom that grows to the right.
const signal = document.getElementById('signal');
for (let i = 0; i < 8; i++) {
  const h = 2 + i;
  el(signal, 'rect', { x: i * 3, y: 1, width: 2, height: 11 - h, fill: '#505050' });
  el(signal, 'rect', { x: i * 3, y: 13 - h, width: 2, height: h, fill: CRIMSON });
}
```
